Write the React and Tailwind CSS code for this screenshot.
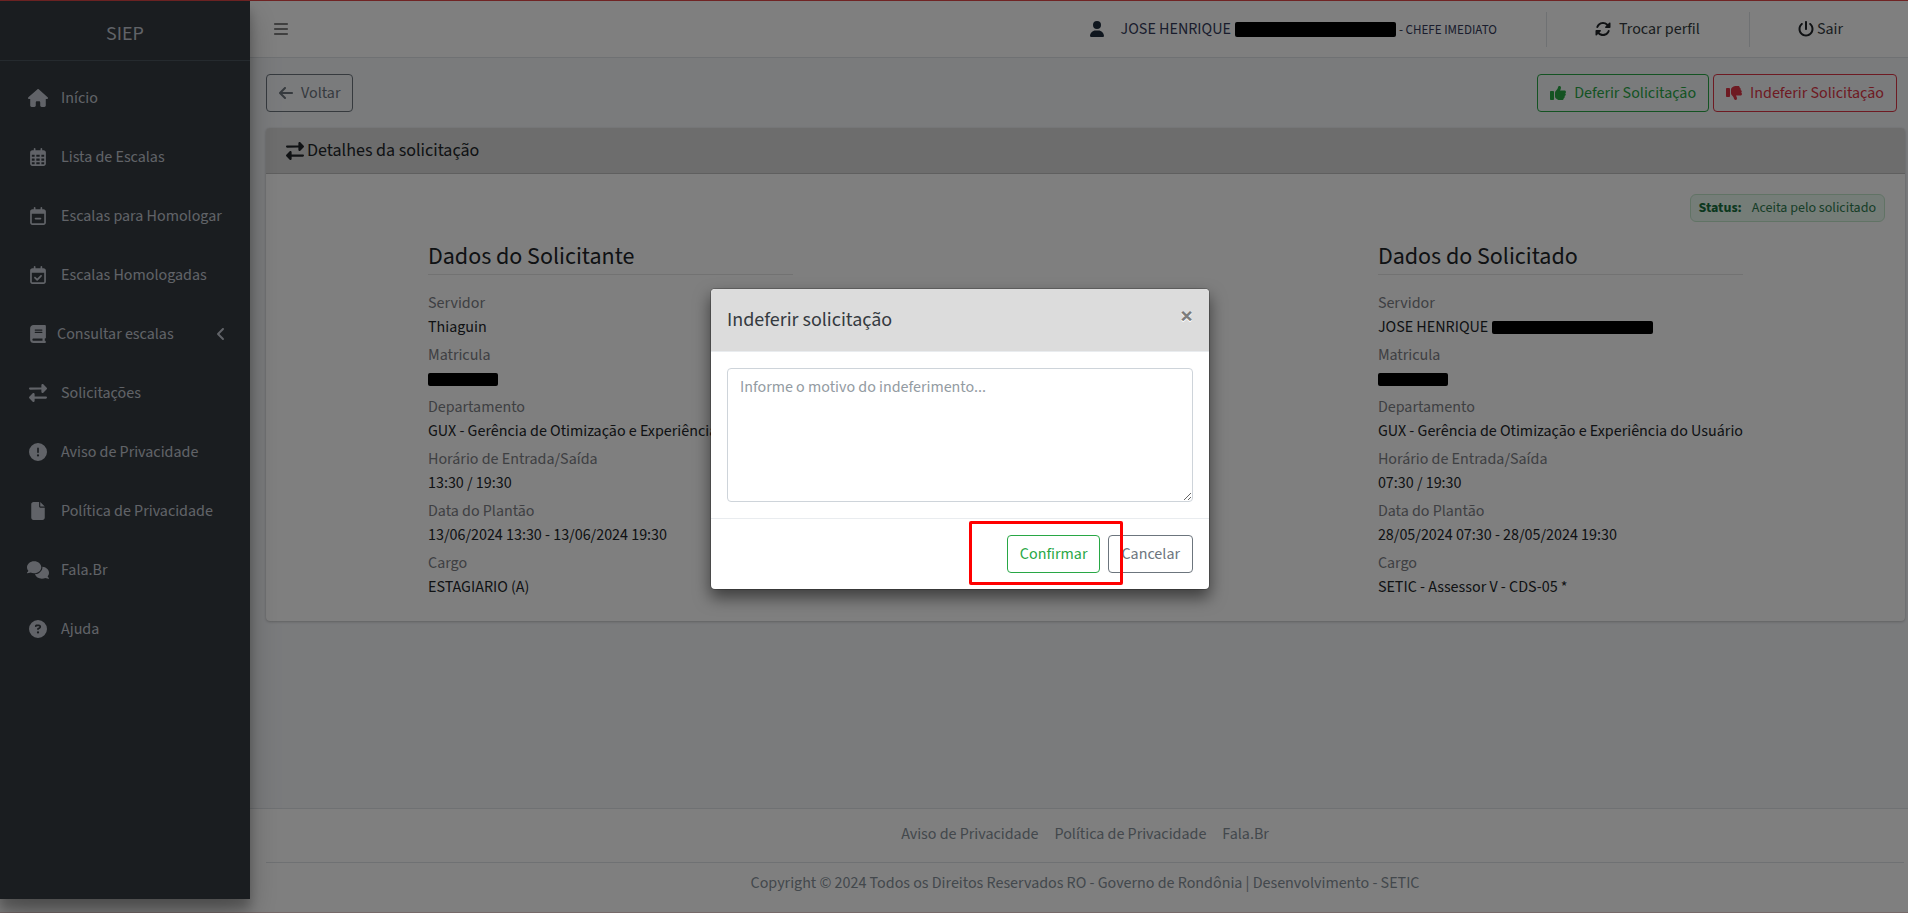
import {
  FaHouse, FaRegCalendarDays, FaRegCalendarMinus, FaRegCalendarCheck, FaBook, FaRightLeft,
  FaCircleExclamation, FaFile, FaComments, FaCircleQuestion, FaAngleLeft, FaBars, FaUser,
  FaRotate, FaPowerOff, FaArrowLeft, FaThumbsUp, FaThumbsDown,
} from "react-icons/fa6";

const menu = [
  { label: "Início", Icon: FaHouse, iconWidth: "w-5" },
  { label: "Lista de Escalas", Icon: FaRegCalendarDays, iconWidth: "w-4" },
  { label: "Escalas para Homologar", Icon: FaRegCalendarMinus, iconWidth: "w-4" },
  { label: "Escalas Homologadas", Icon: FaRegCalendarCheck, iconWidth: "w-4" },
  { label: "Consultar escalas", Icon: FaBook, iconWidth: "w-4", expandable: true },
  { label: "Solicitações", Icon: FaRightLeft, iconWidth: "w-[18px]" },
  { label: "Aviso de Privacidade", Icon: FaCircleExclamation, iconWidth: "w-[18px]" },
  { label: "Política de Privacidade", Icon: FaFile, iconWidth: "w-[14px]" },
  { label: "Fala.Br", Icon: FaComments, iconWidth: "w-[22px]" },
  { label: "Ajuda", Icon: FaCircleQuestion, iconWidth: "w-[18px]" },
];

const department = "GUX - Gerência de Otimização e Experiência do Usuário";

const solicitante = [
  ["Servidor", "Thiaguin"],
  ["Matricula", <Redacted key="m" size="w-[70px] h-[13px]" />],
  ["Departamento", department],
  ["Horário de Entrada/Saída", "13:30 / 19:30"],
  ["Data do Plantão", "13/06/2024 13:30 - 13/06/2024 19:30"],
  ["Cargo", "ESTAGIARIO (A)"],
];

const solicitado = [
  ["Servidor", <span key="s" className="flex items-center gap-1">JOSE HENRIQUE <Redacted size="w-[161px] h-[13px]" /></span>],
  ["Matricula", <Redacted key="m" size="w-[70px] h-[13px]" />],
  ["Departamento", department],
  ["Horário de Entrada/Saída", "07:30 / 19:30"],
  ["Data do Plantão", "28/05/2024 07:30 - 28/05/2024 19:30"],
  ["Cargo", "SETIC - Assessor V - CDS-05 *"],
];

function Redacted({ size }) {
  return <span className={`inline-block rounded-xs bg-black ${size}`} />;
}

function Sidebar() {
  return (
    <aside className="relative z-10 h-[calc(100vh-15px)] w-[250px] shrink-0 bg-[#343a40] text-[#c2c7d0] shadow-[0_14px_28px_rgba(0,0,0,0.25),0_10px_10px_rgba(0,0,0,0.22)]">
      <a href="#" className="flex h-[60px] items-center justify-center border-b border-[#4b545c] pt-[6px] text-[20px] leading-6">SIEP</a>
      <nav className="pt-[7px]">
        <ul>
          {menu.map(({ label, Icon, iconWidth, expandable }) => (
            <li key={label}>
              <a href="#" className={`flex h-[59px] items-center pl-[25px] pr-6 ${expandable ? "gap-[6px]" : "gap-[10px]"}`}>
                <span className="flex w-[26px] shrink-0 justify-center"><Icon className={`h-[18px] shrink-0 ${iconWidth}`} /></span>
                <span className="whitespace-nowrap">{label}</span>
                {expandable && <FaAngleLeft className="ml-auto h-4 w-[10px]" />}
              </a>
            </li>
          ))}
        </ul>
      </nav>
    </aside>
  );
}

function Topbar() {
  return (
    <header className="flex h-[57px] items-center border-b border-[#dee2e6] bg-white pl-6 text-[#343a40]">
      <button type="button" aria-label="Menu" className="text-[#808080]"><FaBars className="h-4 w-[14px]" /></button>
      <div className="ml-auto flex items-center">
        <div className="flex items-center pr-[49px] text-[#343a5a]">
          <FaUser className="mr-[17px] h-4 w-[14px] text-[#1f2d3d]" />
          <span className="mr-1">JOSE HENRIQUE</span>
          <Redacted size="w-[161px] h-[15px]" />
          <span className="ml-[3px] pt-[2px] text-[13px] leading-5">- CHEFE IMEDIATO</span>
        </div>
        <div className="flex h-[35px] items-center border-l border-[#dee2e6] pl-12 pr-[49px]">
          <a href="#" className="flex items-center gap-2"><FaRotate className="size-4 text-[#212529]" />Trocar perfil</a>
        </div>
        <div className="flex h-[35px] items-center border-l border-[#dee2e6] pl-12 pr-[65px]">
          <a href="#" className="flex items-center gap-[3px]"><FaPowerOff className="size-4 text-[#212529]" />Sair</a>
        </div>
      </div>
    </header>
  );
}

function Dados({ title, rows }) {
  return (
    <section>
      <h4 className="mb-4 border-b border-[#e5e5e5] pb-[3px] text-[24px] leading-[29px] text-[#212529]">{title}</h4>
      <dl>
        {rows.map(([label, value]) => (
          <div key={label} className="mb-1">
            <dt className="h-6 text-[#7c8085]">{label}</dt>
            <dd className="flex h-6 items-center whitespace-nowrap text-[#212529]">{value}</dd>
          </div>
        ))}
      </dl>
    </section>
  );
}

function Modal() {
  return (
    <div className="absolute inset-x-0 -inset-y-px z-20 flex items-start justify-center bg-black/50 pl-3 pt-72">
      <div role="dialog" aria-labelledby="modal-title" className="w-[500px] rounded-[5px] border border-black/20 bg-white bg-clip-padding shadow-[0_8px_16px_rgba(0,0,0,0.5)]">
        <div className="flex items-start justify-between rounded-t-sm border-b border-[#e9ecef] bg-[#dcdcdc] p-4">
          <h5 id="modal-title" className="text-[20px] leading-[30px] text-[#343a40]">Indeferir solicitação</h5>
          <button type="button" aria-label="Fechar" className="text-[24px] font-bold leading-6 text-black/50 [text-shadow:0_1px_0_#fff]">×</button>
        </div>
        <div className="p-4">
          <textarea
            rows={5}
            aria-label="Motivo do indeferimento"
            placeholder="Informe o motivo do indeferimento..."
            className="block w-full rounded border border-[#ced4da] bg-white px-3 py-[6px] placeholder:text-[#939ba2]"
          />
        </div>
        <div className="flex justify-end gap-2 border-t border-[#e9ecef] p-4">
          <div className="relative">
            <button type="button" className="h-[38px] rounded border border-[#28a745] px-3 text-[#28a745]">Confirmar</button>
            <div className="pointer-events-none absolute -bottom-3 -left-[38px] -right-[23px] -top-[14px] z-10 rounded-xs border-3 border-[#ff0000]" />
          </div>
          <button type="button" className="h-[38px] rounded border border-[#6c757d] px-3 text-[#6c757d]">Cancelar</button>
        </div>
      </div>
    </div>
  );
}

export default function App() {
  return (
    <div className="relative flex min-h-screen border-y border-t-[#e04848] border-b-[#ead2d2] bg-white font-['Source_Sans_3','Noto_Sans_CJK_SC',sans-serif] text-[16px] leading-6">
      <Sidebar />
      <div className="flex min-w-0 flex-1 flex-col bg-[#f4f6f9]">
        <Topbar />
        <main className="pl-4 pr-[3px] pt-4">
          <div className="flex justify-between pr-2">
            <button type="button" className="flex h-[38px] items-center gap-2 rounded border border-[#6c757d] px-3 text-[#6c757d]">
              <FaArrowLeft className="h-4 w-[14px]" />Voltar
            </button>
            <div className="flex gap-1">
              <button type="button" className="flex h-[38px] items-center gap-2 rounded border border-[#28a745] px-3 text-[#28a745]">
                <FaThumbsUp className="size-4" />Deferir Solicitação
              </button>
              <button type="button" className="flex h-[38px] items-center gap-2 rounded border border-[#dc3545] px-3 text-[#dc3545]">
                <FaThumbsDown className="size-4" />Indeferir Solicitação
              </button>
            </div>
          </div>
          <div className="mt-4 rounded bg-white shadow-[0_0_1px_rgba(0,0,0,0.13),0_1px_3px_rgba(0,0,0,0.2)]">
            <div className="flex h-[46px] items-center gap-[3px] rounded-t border-b border-[#bfbfbf] bg-[#dbdbdb] px-5 text-[#212529]">
              <FaRightLeft className="size-[18px]" />
              <h3 className="text-[18px]">Detalhes da solicitação</h3>
            </div>
            <div className="px-5 pb-[18px] pt-5">
              <div className="flex justify-end">
                <div className="flex h-7 items-center gap-[10px] rounded-md border border-[#c3e6cb] bg-[#eafbf1] px-2 text-[14px] leading-5 text-[#2f7a50]">
                  <strong className="font-bold text-[#19703f]">Status:</strong>Aceita pelo solicitado
                </div>
              </div>
              <div className="flex justify-between px-[142px] pt-5">
                <Dados title="Dados do Solicitante" rows={solicitante} />
                <Dados title="Dados do Solicitado" rows={solicitado} />
              </div>
            </div>
          </div>
        </main>
        <footer className="mt-auto border-t border-[#dee2e6] bg-white pb-[17px] pl-4 pr-1 pt-[13px] text-center text-[#869099]">
          <nav className="flex justify-center gap-4">
            <a href="#">Aviso de Privacidade</a>
            <a href="#">Política de Privacidade</a>
            <a href="#">Fala.Br</a>
          </nav>
          <p className="mt-4 border-t border-[#dee2e6] pt-2">Copyright © 2024 Todos os Direitos Reservados RO - Governo de Rondônia | Desenvolvimento - SETIC</p>
        </footer>
      </div>
      <Modal />
    </div>
  );
}
